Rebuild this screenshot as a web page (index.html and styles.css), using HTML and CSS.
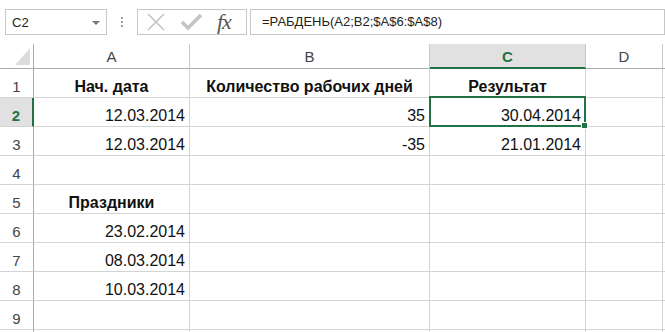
FILE: index.html
```html
<!DOCTYPE html>
<html lang="ru">
<head>
  <meta charset="UTF-8">
  <title>РАБДЕНЬ</title>
  <link rel="stylesheet" href="styles.css">
</head>
<body>

  <!-- строка формул -->
  <div class="formula-bar">
    <div class="name-box">
      <span>C2</span>
      <span class="drop"></span>
    </div>
    <div class="grip"><i></i><i></i><i></i></div>
    <div class="fx-box">
      <svg class="ico" width="20" height="20" viewBox="0 0 20 20">
        <path d="M2 2 L18 18 M18 2 L2 18" stroke="#c4c4c4" stroke-width="1.6" fill="none"/>
      </svg>
      <svg class="ico" width="22" height="18" viewBox="0 0 22 18">
        <path d="M2 9 L8 15 L21 2" stroke="#c4c4c4" stroke-width="3.4" fill="none"/>
      </svg>
      <span class="fx">fx</span>
    </div>
    <div class="formula">=РАБДЕНЬ(A2;B2;$A$6:$A$8)</div>
  </div>

  <!-- лист -->
  <div class="sheet">
    <div class="hd corner"><span class="tri"></span></div>
    <div class="hd">A</div>
    <div class="hd">B</div>
    <div class="hd active">C</div>
    <div class="hd">D</div>
    <div class="hd last"></div>

    <div class="rn">1</div>
    <div class="cell b">Нач. дата</div>
    <div class="cell b">Количество рабочих дней</div>
    <div class="cell b">Результат</div>
    <div class="cell"></div>
    <div class="cell"></div>

    <div class="rn active">2</div>
    <div class="cell num">12.03.2014</div>
    <div class="cell num">35</div>
    <div class="cell num selected">30.04.2014<span class="sel"><span class="handle"></span></span></div>
    <div class="cell"></div>
    <div class="cell"></div>

    <div class="rn">3</div>
    <div class="cell num">12.03.2014</div>
    <div class="cell num">-35</div>
    <div class="cell num">21.01.2014</div>
    <div class="cell"></div>
    <div class="cell"></div>

    <div class="rn">4</div>
    <div class="cell"></div>
    <div class="cell"></div>
    <div class="cell"></div>
    <div class="cell"></div>
    <div class="cell"></div>

    <div class="rn">5</div>
    <div class="cell b">Праздники</div>
    <div class="cell"></div>
    <div class="cell"></div>
    <div class="cell"></div>
    <div class="cell"></div>

    <div class="rn">6</div>
    <div class="cell num">23.02.2014</div>
    <div class="cell"></div>
    <div class="cell"></div>
    <div class="cell"></div>
    <div class="cell"></div>

    <div class="rn">7</div>
    <div class="cell num">08.03.2014</div>
    <div class="cell"></div>
    <div class="cell"></div>
    <div class="cell"></div>
    <div class="cell"></div>

    <div class="rn">8</div>
    <div class="cell num">10.03.2014</div>
    <div class="cell"></div>
    <div class="cell"></div>
    <div class="cell"></div>
    <div class="cell"></div>

    <div class="rn">9</div>
    <div class="cell"></div>
    <div class="cell"></div>
    <div class="cell"></div>
    <div class="cell"></div>
    <div class="cell"></div>

    <div class="rn"></div>
    <div class="cell"></div>
    <div class="cell"></div>
    <div class="cell"></div>
    <div class="cell"></div>
    <div class="cell"></div>
  </div>

</body>
</html>
```

FILE: styles.css
```css
body {
  margin: 0;
  background-color: #fff;
  font-family: "Liberation Sans", Arial, sans-serif;
  overflow: hidden;
}

/* строка формул */
.formula-bar {
  display: flex;
  align-items: flex-start;
  height: 44px;
  padding: 9px 0 0 5px;
  box-sizing: border-box;
}

.name-box {
  width: 102px;
  height: 26px;
  box-sizing: border-box;
  border: 1px solid #c6c6c6;
  display: flex;
  align-items: center;
  justify-content: space-between;
  padding: 0 6px 0 6px;
  font-size: 13px;
  color: #222;
}

.drop {
  width: 0;
  height: 0;
  border-left: 4px solid transparent;
  border-right: 4px solid transparent;
  border-top: 4px solid #777;
  margin-top: 1px;
}

.grip {
  width: 2px;
  margin: 8px 14px 0 14px;
  display: flex;
  flex-direction: column;
  gap: 2px;
}

.grip i {
  display: block;
  width: 2px;
  height: 2px;
  background-color: #a0a0a0;
}

.fx-box {
  width: 110px;
  height: 26px;
  box-sizing: border-box;
  border: 1px solid #c6c6c6;
  display: flex;
  align-items: center;
  padding-left: 8px;
  gap: 14px;
}

.ico {
  display: block;
}

.fx {
  font-family: "Liberation Serif", serif;
  font-style: italic;
  font-size: 22px;
  color: #555;
  margin-left: 1px;
  letter-spacing: -1px;
}

.formula {
  margin-left: 3px;
  width: 415px;
  height: 26px;
  box-sizing: border-box;
  border: 1px solid #c6c6c6;
  padding-left: 11px;
  font-size: 13px;
  line-height: 24px;
  color: #222;
}

/* лист */
.sheet {
  display: grid;
  grid-template-columns: 34px 156px 240px 156px 77px 1fr;
  grid-template-rows: 25px;
  grid-auto-rows: 29px;
}

.hd {
  border-right: 1px solid #c8c8c8;
  border-bottom: 1px solid #ababab;
  display: flex;
  align-items: center;
  justify-content: center;
  font-size: 15px;
  color: #444;
  padding-top: 1px;
}

.hd.corner {
  border-right-color: #ababab;
  position: relative;
}

.tri {
  position: absolute;
  right: 3px;
  bottom: 3px;
  width: 0;
  height: 0;
  border-left: 15px solid transparent;
  border-bottom: 17px solid #dcdcdc;
}

.hd.active {
  background-color: #e1e1e1;
  color: #217346;
  font-weight: bold;
  border-bottom: 2px solid #217346;
}

.hd.last {
  border-right: none;
}

.rn {
  border-right: 1px solid #ababab;
  border-bottom: 1px solid #d4d4d4;
  display: flex;
  align-items: flex-end;
  justify-content: center;
  padding-bottom: 3px;
  font-size: 15px;
  line-height: 15px;
  color: #444;
}

.rn.active {
  background-color: #e1e1e1;
  color: #217346;
  font-weight: bold;
  border-right: 2px solid #217346;
}

.cell {
  border-right: 1px solid #d4d4d4;
  border-bottom: 1px solid #d4d4d4;
  display: flex;
  align-items: flex-end;
  padding: 0 4px 3px 4px;
  font-size: 16px;
  line-height: 15px;
  color: #111;
  white-space: nowrap;
}

.cell.b {
  font-weight: bold;
  justify-content: center;
}

.cell.num {
  justify-content: flex-end;
}

.cell.selected {
  position: relative;
}

.sel {
  position: absolute;
  left: -1px;
  top: -2px;
  right: -1px;
  bottom: -1px;
  border: 2px solid #217346;
}

.handle {
  position: absolute;
  right: -4px;
  bottom: -4px;
  width: 5px;
  height: 5px;
  background-color: #217346;
  border: 1px solid #fff;
}
```
